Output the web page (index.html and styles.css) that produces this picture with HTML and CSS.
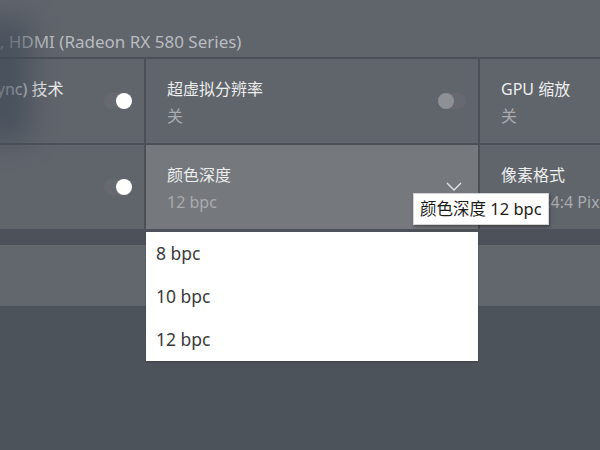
FILE: index.html
```html
<!DOCTYPE html>
<html lang="zh-CN">
<head>
    <meta charset="UTF-8">
    <title>显示器</title>
    <link rel="stylesheet" href="styles.css">
</head>
<body>
    <div class="blur-blob"></div>
    <div class="panel">
        <div class="header">
            <div class="header-text">ASUS VX279, HDMI (Radeon RX 580 Series)</div>
        </div>
        <div class="grid">
            <div class="cell">
                <div class="info">
                    <div class="title">(AMD FreeSync) 技术</div>
                    <div class="value">&nbsp;</div>
                </div>
                <div class="toggle on"><span class="knob"></span></div>
            </div>
            <div class="cell">
                <div class="info">
                    <div class="title">超虚拟分辨率</div>
                    <div class="value">关</div>
                </div>
                <div class="toggle"><span class="knob"></span></div>
            </div>
            <div class="cell">
                <div class="info">
                    <div class="title">GPU 缩放</div>
                    <div class="value">关</div>
                </div>
            </div>

            <div class="cell">
                <div class="info"></div>
                <div class="toggle on"><span class="knob"></span></div>
            </div>
            <div class="cell active">
                <div class="info">
                    <div class="title">颜色深度</div>
                    <div class="value">12 bpc</div>
                </div>
                <svg class="chevron" width="16" height="10" viewBox="0 0 16 10">
                    <polyline points="1,1 8,8 15,1" fill="none" stroke="#e6e7e9" stroke-width="1.3"/>
                </svg>
            </div>
            <div class="cell">
                <div class="info">
                    <div class="title">像素格式</div>
                    <div class="value">RGB 4:4:4 Pixel Format</div>
                </div>
            </div>
        </div>
        <div class="strip"></div>
        <div class="row-low"></div>

        <ul class="dropdown">
            <li>8 bpc</li>
            <li>10 bpc</li>
            <li>12 bpc</li>
        </ul>
        <div class="tooltip">颜色深度 12 bpc</div>
    </div>
</body>
</html>
```

FILE: styles.css
```css
* {
    margin: 0;
    padding: 0;
    box-sizing: border-box;
}

body {
    font-family: 'Noto Sans', 'Noto Sans CJK SC', sans-serif;
    background: #4d535a;
    width: 600px;
    height: 450px;
    overflow: hidden;
}

.panel {
    position: relative;
    height: 450px;
    overflow: hidden;
}

.header {
    height: 59px;
    background: #60646b;
    border-bottom: 2px solid #4b5058;
    margin-left: -96px;
    display: flex;
    align-items: flex-end;
    padding-bottom: 4px;
}

.header-text {
    color: #b9bcc1;
    font-size: 17px;
    line-height: 23px;
}

.grid {
    display: grid;
    grid-template-columns: 255px 332px 140px;
    grid-template-rows: 84px 84px;
    gap: 2px;
    background: #4b5058;
    margin-left: -111px;
}

.cell {
    background: #60646b;
    display: flex;
    align-items: center;
    padding: 0 12px 0 21px;
    overflow: hidden;
}

.cell.active {
    background: #75797e;
    padding-right: 16px;
}

.info {
    flex: 1;
    min-width: 0;
    white-space: nowrap;
    padding-top: 3px;
}

.title {
    color: #eceded;
    font-size: 16px;
    line-height: 22px;
}

.value {
    color: #a8abb0;
    font-size: 16px;
    line-height: 22px;
    margin-top: 5px;
}

.toggle {
    width: 28px;
    height: 16px;
    border-radius: 8px;
    background: rgba(255, 255, 255, 0.04);
    display: flex;
    align-items: center;
}

.knob {
    width: 16px;
    height: 16px;
    border-radius: 50%;
    background: #8d9095;
}

.toggle.on {
    justify-content: flex-end;
}

.toggle.on .knob {
    background: #ffffff;
}

.strip {
    height: 16px;
    background: #4d525a;
}

.row-low {
    height: 61px;
    background: #62666d;
}

.dropdown {
    position: absolute;
    left: 146px;
    top: 232px;
    width: 332px;
    list-style: none;
    background: #ffffff;
    box-shadow: 0 1px 2px rgba(0, 0, 0, 0.2);
}

.dropdown li {
    height: 43px;
    line-height: 43px;
    padding-left: 10px;
    font-size: 17.5px;
    color: #3a3b3d;
}

.tooltip {
    position: absolute;
    left: 413px;
    top: 193px;
    height: 32px;
    padding: 0 6px;
    background: #ffffff;
    border: 1px solid #d4d4d4;
    box-shadow: 1px 2px 3px rgba(0, 0, 0, 0.35);
    color: #1b1b1b;
    font-size: 16.5px;
    line-height: 30px;
    white-space: nowrap;
    z-index: 2;
}

.blur-blob {
    position: absolute;
    left: -30px;
    top: 20px;
    width: 60px;
    height: 120px;
    background: #3f4a57;
    filter: blur(14px);
    opacity: 0.7;
    z-index: 1;
}
```
